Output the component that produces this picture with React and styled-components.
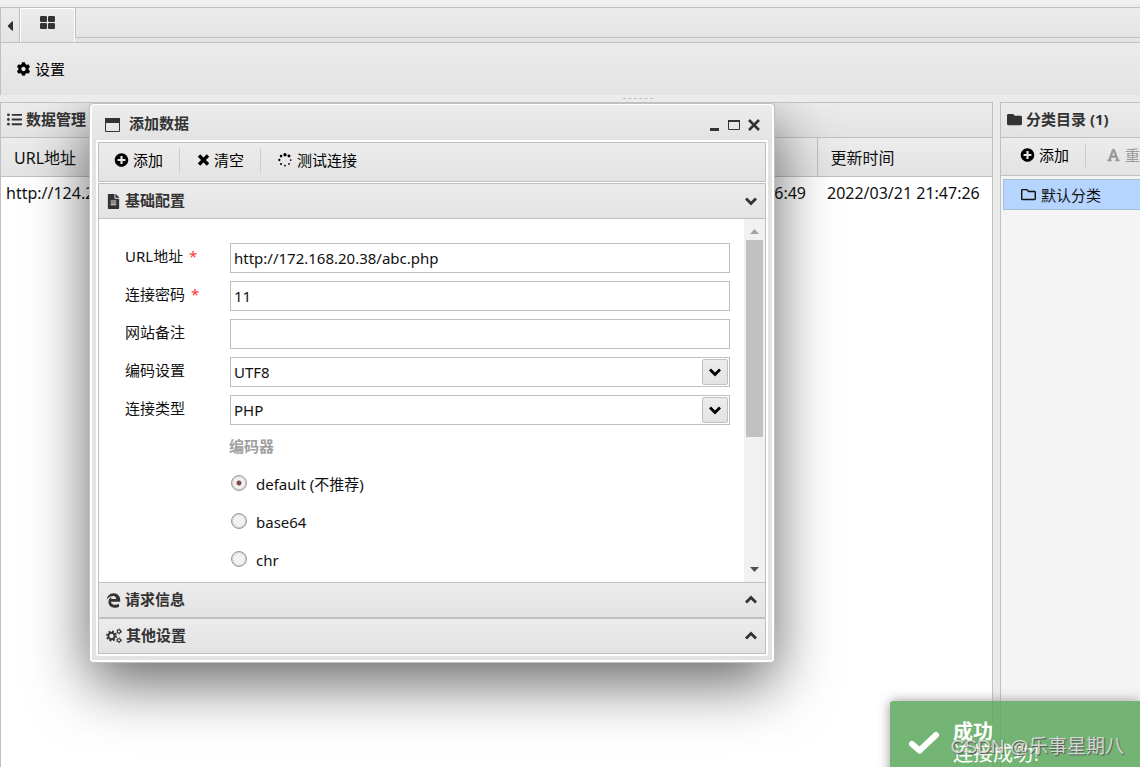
import React, { useState } from 'react';
import styled, { createGlobalStyle, css } from 'styled-components';
import {
  FaCaretLeft, FaCog, FaListUl, FaPlusCircle,
  FaFileAlt, FaEdgeLegacy, FaFolder, FaRegFolder, FaFont,
} from 'react-icons/fa';

const GlobalStyle = createGlobalStyle`
  * {
    box-sizing: border-box;
  }
  html, body, #root {
    height: 100%;
  }
  body {
    margin: 0;
    overflow: hidden;
    background: #ebebeb;
    color: #111;
    font-family: 'Noto Sans', 'Noto Sans CJK SC', sans-serif;
    font-size: 15px;
    line-height: 20px;
  }
  button, input, select {
    font: inherit;
    color: inherit;
  }
`

const line = '#c0c0c0';

const gradient = css`
  background: linear-gradient(#ececec, #e3e3e3);
`

const Page = styled.div`
  position: relative;
  display: flex;
  flex-direction: column;
  height: 100vh;
  padding-top: 3px;
  border-top: 4px solid #f0f0f0;
  overflow: hidden;
`

const TabBar = styled.nav`
  display: flex;
  flex: none;
  height: 36px;
  border: 1px solid ${line};
  border-right: 0;
  ${gradient}
`

const TabArrow = styled.button`
  display: flex;
  align-items: center;
  justify-content: center;
  width: 19px;
  padding: 2px 0 0;
  border: 0;
  border-right: 1px solid ${line};
  background: transparent;
  color: #333;
  font-size: 16px;
`

const Tab = styled.button`
  width: 55px;
  padding: 0 0 6px;
  border: 1px solid #fff;
  border-bottom: 0;
  background: transparent;
  color: #333;
  svg {
    display: block;
    margin: 0 auto;
  }
`

const TabRest = styled.div`
  flex: 1;
  height: 30px;
  border-left: 1px solid ${line};
  border-bottom: 1px solid ${line};
`

const MainTools = styled.div`
  display: flex;
  flex: none;
  align-items: center;
  height: 52px;
  padding-left: 10px;
  border-left: 1px solid ${line};
  ${gradient}
`

const ToolButton = styled.button`
  display: flex;
  align-items: center;
  gap: 4px;
  padding: 0 5px;
  border: 0;
  background: transparent;
  color: #000;
  white-space: nowrap;
  svg {
    min-width: 14px;
    height: 14px;
  }
  &:disabled {
    color: #999;
  }
`

const Splitter = styled.div`
  display: flex;
  flex: none;
  justify-content: center;
  height: 7px;
  padding: 3px 0 0 136px;
  div {
    width: 30px;
    height: 1px;
    border-top: 1px dashed ${line};
  }
`

const Columns = styled.div`
  display: grid;
  grid-template-columns: minmax(0, 1fr) 140px;
  gap: 7px;
  flex: 1;
  min-height: 0;
`

const Panel = styled.section`
  display: flex;
  flex-direction: column;
  overflow: hidden;
  border: 1px solid ${line};
  border-bottom: 0;
  border-right-width: ${props => (props.$open ? 0 : '1px')};
  background: ${props => props.$bg};
`

const PanelTitle = styled.h2`
  display: flex;
  flex: none;
  align-items: center;
  gap: 4px;
  height: 35px;
  margin: 0;
  padding: 0 6px 2px;
  border-bottom: 1px solid ${line};
  color: #333;
  font-size: 15px;
  font-weight: bold;
  white-space: nowrap;
  ${gradient}
`

const Table = styled.table`
  width: 100%;
  border-collapse: collapse;
  table-layout: fixed;
  font-size: 16px;
  white-space: nowrap;
  th {
    height: 38px;
    padding: 3px 13px 0;
    border-bottom: 1px solid ${line};
    border-right: 1px solid ${line};
    text-align: left;
    font-weight: normal;
    ${gradient}
  }
  th:last-child {
    border-right: 0;
  }
  td {
    height: 33px;
    padding: 0 5px;
  }
  td:nth-child(2) {
    padding-right: 11px;
    text-align: right;
  }
  td:last-child {
    padding: 0 10px;
  }
`

const SideTools = styled.div`
  display: flex;
  flex: none;
  align-items: center;
  height: 38px;
  padding: 0 0 3px 14px;
  border-bottom: 1px solid ${line};
  ${gradient}
`

const Divider = styled.span`
  flex: none;
  width: 1px;
  height: 25px;
  margin: 0 ${props => (props.$wide ? '15px' : '11px')} 0 11px;
  background: #bcd3da;
`

const Tree = styled.ul`
  margin: 0;
  padding: 3px 0 0 2px;
  list-style: none;
`

const TreeItem = styled.li`
  display: flex;
  align-items: center;
  gap: 5px;
  height: 31px;
  padding-left: 17px;
  border: 1px solid #a4bed4;
  border-right: 0;
  background: #b5d5ff;
`

// the shadow falls to the sides and below, never over the toolbar
const Dialog = styled.div`
  position: absolute;
  left: 89px;
  top: 99px;
  width: 686px;
  padding: 0 6px 6px;
  border: 1px solid ${line};
  border-radius: 4px;
  background: #e3e3e3;
  box-shadow: inset 0 0 0 2px #fff, 0 20px 60px rgba(0, 0, 0, 0.6);
  clip-path: inset(0 -100px -120px -100px);
`

const DialogHead = styled.header`
  display: flex;
  align-items: center;
  height: 36px;
  margin: 0 -5px;
  padding: 4px 8px 0 12px;
  border: 1px solid #fff;
  border-bottom: 0;
  border-radius: 3px 3px 0 0;
  color: #333;
  ${gradient}
  h1 {
    flex: 1;
    margin: 0 0 4px 8px;
    font-size: 15px;
    font-weight: bold;
  }
`

const WindowButton = styled.button`
  display: flex;
  width: 20px;
  padding: 0;
  border: 0;
  background: transparent;
  justify-content: center;
`

const DialogBody = styled.div`
  border: 2px solid #fff;
  background: #fff;
`

const DialogTools = styled.div`
  display: flex;
  align-items: center;
  height: 40px;
  padding: 0 0 4px 10px;
  margin-bottom: 1px;
  border: 1px solid ${line};
  ${gradient}
`

const Fold = styled.button`
  display: flex;
  align-items: center;
  gap: 4px;
  width: 100%;
  height: 36px;
  padding: 0 7px;
  border: 1px solid ${line};
  color: #333;
  font-weight: bold;
  text-align: left;
  ${gradient}
  span {
    flex: 1;
    padding-bottom: 2px;
  }
`

const FormArea = styled.div`
  display: flex;
  height: 363px;
  border: 1px solid ${line};
  border-width: 0 1px;
  background: #fff;
  overflow: hidden;
`

const Form = styled.form`
  flex: 1;
  padding: 24px 14px 0 26px;
`

const Row = styled.div`
  display: grid;
  grid-template-columns: 105px 1fr;
  height: 38px;
  label {
    padding-top: 3px;
  }
  em {
    margin-left: 2px;
    color: #f33;
    font-style: normal;
  }
`

const Input = styled.input`
  width: 100%;
  height: 30px;
  padding: 0 3px;
  border: 1px solid ${line};
  background: #fff;
  outline: 0;
`

const SelectBox = styled.div`
  position: relative;
  height: 30px;
  select {
    width: 100%;
    height: 30px;
    padding: 0 3px;
    border: 1px solid ${line};
    border-radius: 0;
    background: #fff;
    appearance: none;
  }
`

const SelectArrow = styled.span`
  position: absolute;
  right: 2px;
  top: 2px;
  display: flex;
  align-items: center;
  justify-content: center;
  width: 26px;
  height: 26px;
  border: 1px solid ${line};
  border-radius: 2px;
  color: #000;
  pointer-events: none;
  ${gradient}
`

const Options = styled.fieldset`
  margin: 0 0 0 104px;
  padding: 0;
  border: 0;
  legend {
    height: 38px;
    padding: 3px 0 0;
    color: #a0a0a0;
    font-weight: bold;
  }
`

const Option = styled.label`
  display: flex;
  gap: 9px;
  height: 38px;
  padding: 3px 0 0 2px;
  input {
    width: 16px;
    height: 16px;
    margin: 1px 0 0;
    border: 1px solid #9c9797;
    border-radius: 50%;
    background: #f2f2f2;
    box-shadow: inset 0 0 1px 1px #d2cfcf;
    appearance: none;
  }
  input:checked {
    background: radial-gradient(#7d4a4a 2px, #f2f2f2 3px);
  }
`

const ScrollBar = styled.div`
  display: flex;
  flex-direction: column;
  width: 21px;
  padding: 0 2px;
  background: #f1f1f1;
  svg {
    flex: none;
    display: block;
  }
`

const Thumb = styled.div`
  height: 197px;
  margin-bottom: auto;
  background: #c1c1c1;
`

const Toast = styled.div`
  position: absolute;
  left: 890px;
  right: 0;
  top: 697px;
  display: flex;
  gap: 13px;
  height: 100px;
  padding: 20px 18px;
  border-radius: 3px 0 0 0;
  background: rgba(95, 169, 95, 0.87);
  box-shadow: 0 0 12px #999;
  color: #fff;
  font-family: 'Liberation Serif', 'Noto Sans CJK SC', serif;
  font-size: 20px;
  line-height: 22px;
  svg {
    margin-top: 6px;
  }
  p, strong {
    display: block;
    margin: 0;
  }
`

const Watermark = styled.div`
  position: absolute;
  right: 16px;
  bottom: 6px;
  color: rgba(225, 225, 225, 0.9);
  font-family: 'Liberation Sans', 'Noto Sans CJK SC', sans-serif;
  font-size: 19px;
  line-height: 28px;
  text-shadow: 1px 1px 1px #555;
`

const Chevron = ({ up }) => (
  <svg width="14" height="14" viewBox="0 0 14 14" fill="none" stroke="currentColor" strokeWidth="2.8">
    <path d={up ? 'M2 9.5L7 4.5L12 9.5' : 'M2 4.5L7 9.5L12 4.5'} />
  </svg>
)

const Tiles = () => (
  <svg width="15" height="13" viewBox="0 0 15 13" fill="currentColor">
    <rect x="0" y="0" width="7" height="6" rx="1.200" />
    <rect x="8" y="0" width="7" height="6" rx="1.200" />
    <rect x="0" y="7" width="7" height="6" rx="1.200" />
    <rect x="8" y="7" width="7" height="6" rx="1.200" />
  </svg>
)

const Cross = () => (
  <svg width="14" height="14" viewBox="0 0 14 14" stroke="currentColor" strokeWidth="3.400">
    <path d="M3 2.500L12 11.500M12 2.500L3 11.500" />
  </svg>
)

const Dots = () => (
  <svg width="16" height="16" viewBox="0 0 16 16" fill="currentColor">
    <circle cx="8" cy="2" r="1.900" />
    <circle cx="12.500" cy="3.500" r="1.700" />
    <circle cx="14.500" cy="8" r="1" />
    <circle cx="12.500" cy="12.500" r="1" />
    <circle cx="8" cy="14.400" r="1.100" />
    <circle cx="3.500" cy="12.500" r="1.200" />
    <circle cx="1.500" cy="8" r="1.300" />
    <circle cx="3.500" cy="3.500" r="1.500" />
  </svg>
)

const Gears = () => (
  <svg width="16" height="16" viewBox="0 0 16 16" fill="none" stroke="currentColor">
    <circle cx="5.500" cy="8" r="3.200" strokeWidth="2" />
    <circle cx="5.500" cy="8" r="4.700" strokeWidth="1.600" strokeDasharray="1.850 1.840" />
    <circle cx="13" cy="3.500" r="1.600" strokeWidth="1.100" />
    <circle cx="13" cy="3.500" r="2.400" strokeWidth="0.900" strokeDasharray="1.260 1.250" />
    <circle cx="13" cy="12.300" r="1.600" strokeWidth="1.100" />
    <circle cx="13" cy="12.300" r="2.400" strokeWidth="0.900" strokeDasharray="1.260 1.250" />
  </svg>
)

const fields = [
  { id: 'url', label: 'URL地址', required: true, value: 'http://172.168.20.38/abc.php' },
  { id: 'pwd', label: '连接密码', required: true, value: '11' },
  { id: 'note', label: '网站备注', required: false, value: '' },
];

const selects = [
  { id: 'encode', label: '编码设置', options: ['UTF8', 'GBK'] },
  { id: 'type', label: '连接类型', options: ['PHP', 'ASP'] },
];

const encoders = [
  { id: 'default', label: 'default (不推荐)' },
  { id: 'base64', label: 'base64' },
  { id: 'chr', label: 'chr' },
];

function AddDialog() {
  const [encoder, setEncoder] = useState('default');
  return (
    <Dialog role="dialog" aria-labelledby="dialog-title">
      <DialogHead>
        <svg width="17" height="17" viewBox="0 0 17 17">
          <path d="M1.5 2.5h14v13h-14z" fill="none" stroke="#333" />
          <path d="M1 2h15v5H1z" fill="#333" />
        </svg>
        <h1 id="dialog-title">添加数据</h1>
        <WindowButton aria-label="最小化">
          <svg width="14" height="14"><path d="M3 10h9v3H3z" fill="#333" /></svg>
        </WindowButton>
        <WindowButton aria-label="最大化">
          <svg width="14" height="14">
            <path d="M1.5 2.5h11v9h-11z" fill="none" stroke="#333" />
            <path d="M1 2h12v2H1z" fill="#333" />
          </svg>
        </WindowButton>
        <WindowButton aria-label="关闭">
          <svg width="14" height="14"><path d="M2 2L12 12M12 2L2 12" stroke="#333" strokeWidth="2.600" /></svg>
        </WindowButton>
      </DialogHead>
      <DialogBody>
        <DialogTools>
          <ToolButton><FaPlusCircle />添加</ToolButton>
          <Divider />
          <ToolButton><Cross />清空</ToolButton>
          <Divider />
          <ToolButton><Dots />测试连接</ToolButton>
        </DialogTools>
        <Fold><FaFileAlt /><span>基础配置</span><Chevron /></Fold>
        <FormArea>
          <Form>
            {fields.map(f => (
              <Row key={f.id}>
                <label htmlFor={f.id}>{f.label} {f.required && <em>*</em>}</label>
                <Input id={f.id} defaultValue={f.value} />
              </Row>
            ))}
            {selects.map(s => (
              <Row key={s.id}>
                <label htmlFor={s.id}>{s.label}</label>
                <SelectBox>
                  <select id={s.id}>
                    {s.options.map(o => <option key={o}>{o}</option>)}
                  </select>
                  <SelectArrow><Chevron /></SelectArrow>
                </SelectBox>
              </Row>
            ))}
            <Options>
              <legend>编码器</legend>
              {encoders.map(e => (
                <Option key={e.id}>
                  <input type="radio" name="encoder" checked={encoder === e.id} onChange={() => setEncoder(e.id)} />
                  {e.label}
                </Option>
              ))}
            </Options>
          </Form>
          <ScrollBar>
            <svg width="17" height="21"><path d="M4 15h9L8.500 10z" fill="#a3a3a3" /></svg>
            <Thumb />
            <svg width="17" height="21"><path d="M4 6h9L8.500 11z" fill="#505050" /></svg>
          </ScrollBar>
        </FormArea>
        <Fold><FaEdgeLegacy /><span>请求信息</span><Chevron up /></Fold>
        <Fold><Gears /><span>其他设置</span><Chevron up /></Fold>
      </DialogBody>
    </Dialog>
  )
}

function App() {
  return (
    <Page>
      <GlobalStyle />
      <TabBar>
        <TabArrow aria-label="向左"><FaCaretLeft /></TabArrow>
        <Tab aria-label="主页"><Tiles /></Tab>
        <TabRest />
      </TabBar>
      <MainTools>
        <ToolButton><FaCog />设置</ToolButton>
      </MainTools>
      <Splitter><div /></Splitter>
      <Columns>
        <Panel $bg="#fff">
          <PanelTitle><FaListUl />数据管理</PanelTitle>
          <Table>
            <colgroup>
              <col />
              <col />
              <col width="175" />
            </colgroup>
            <thead>
              <tr><th>URL地址</th><th>创建时间</th><th>更新时间</th></tr>
            </thead>
            <tbody>
              <tr><td>http://124.2</td><td>2022/03/21 21:46:49</td><td>2022/03/21 21:47:26</td></tr>
            </tbody>
          </Table>
        </Panel>
        <Panel $bg="#f4f4f4" $open>
          <PanelTitle><FaFolder />分类目录 (1)</PanelTitle>
          <SideTools>
            <ToolButton><FaPlusCircle />添加</ToolButton>
            <Divider $wide />
            <ToolButton disabled><FaFont />重命名</ToolButton>
          </SideTools>
          <Tree>
            <TreeItem><FaRegFolder />默认分类</TreeItem>
          </Tree>
        </Panel>
      </Columns>
      <AddDialog />
      <Toast role="status">
        <svg width="32" height="32" viewBox="0 0 32 32" fill="none" stroke="#fff" strokeWidth="6" strokeLinecap="round" strokeLinejoin="round">
          <path d="M4 17L11.500 23.500L28 8" />
        </svg>
        <div>
          <strong>成功</strong>
          <p>连接成功!</p>
        </div>
      </Toast>
      <Watermark>CSDN @乐事星期八</Watermark>
    </Page>
  );
}

export default App;
